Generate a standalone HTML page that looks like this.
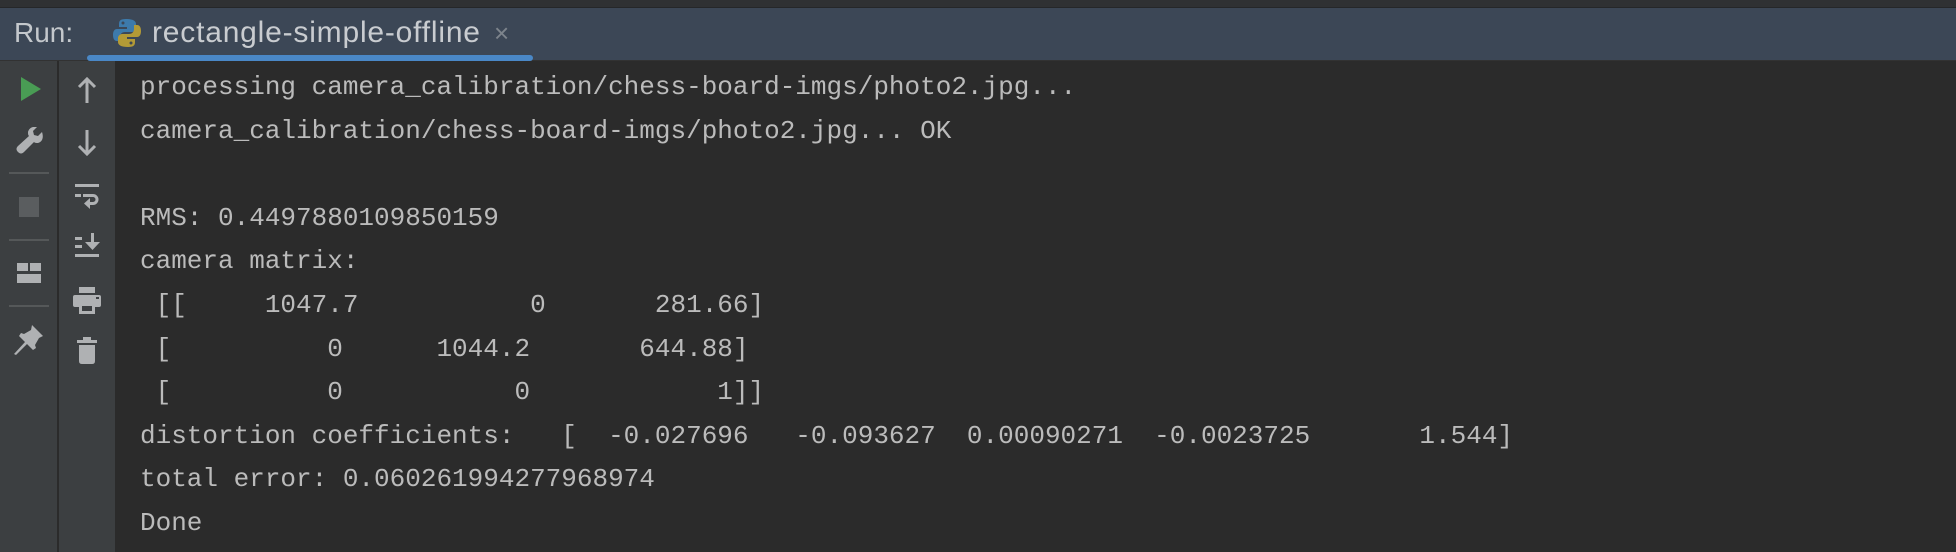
<!DOCTYPE html>
<html><head><meta charset="utf-8"><style>
html,body{margin:0;padding:0;width:1956px;height:552px;overflow:hidden;background:#2b2b2b;}
.top{position:absolute;left:0;top:0;width:1956px;height:7px;background:#2f3133;border-bottom:1px solid #252729;}
.tabs{position:absolute;left:0;top:8px;width:1956px;height:52px;background:#3c4756;}
.tabline{position:absolute;left:0;top:60px;width:1956px;height:1px;background:#323232;}
.run{position:absolute;left:14px;top:17px;font:28px "Liberation Sans",sans-serif;color:#c4c8cc;}
.tabt{position:absolute;left:152px;top:16px;font:30px "Liberation Sans",sans-serif;letter-spacing:0.8px;color:#c9ccd0;white-space:nowrap;}
.x{position:absolute;left:494px;top:18px;font:26px "Liberation Sans",sans-serif;color:#7d848c;}
.ul{position:absolute;left:87px;top:55px;width:446px;height:6px;border-radius:3px;background:#4a88c7;}
.c1{position:absolute;left:0;top:61px;width:57px;height:491px;background:#3c3f41;}
.c2{position:absolute;left:59px;top:61px;width:56px;height:491px;background:#3c3f41;}
.sep{position:absolute;left:9px;width:40px;height:2px;background:#555859;}
pre{position:absolute;left:140px;top:66px;margin:0;font:26px/43.6px "Liberation Mono",monospace;color:#bbbbbb;}
svg{position:absolute;}
</style></head><body>
<div class="top"></div>
<div class="tabs"></div>
<div class="tabline"></div>
<div class="run">Run:</div>
<svg style="left:113px;top:18px" width="28" height="30" viewBox="0 0 28 30">
<path d="M13 1C7 1 6 3 6 6v3h8v2H4C1 11 0 14 0 17s1 6 4 6h3v-4c0-3 2-5 5-5h7c2 0 4-2 4-4V6c0-3-3-5-10-5z" fill="#3d7aab"/>
<circle cx="10" cy="5" r="1.5" fill="#3c4756"/>
<path d="M15 29c6 0 7-2 7-5v-3h-8v-2h10c3 0 4-3 4-6s-1-6-4-6h-3v4c0 3-2 5-5 5H9c-2 0-4 2-4 4v4c0 3 3 5 10 5z" fill="#b39a36"/>
<circle cx="18" cy="25" r="1.5" fill="#3c4756"/>
</svg>
<div class="tabt">rectangle-simple-offline</div>
<div class="x">×</div>
<div class="ul"></div>
<div class="c1"></div>
<div class="c2"></div>
<svg style="left:21px;top:77px" width="20" height="24"><path d="M0 0L20 12L0 24Z" fill="#499c54"/></svg>
<svg style="left:16px;top:127px" width="28" height="27" viewBox="0 0 28 27"><path d="M26 5l-4 4-4-1-1-4 4-4c-4-1-8 1-9 5 0 2 0 3 1 4L2 19c-2 2-2 4 0 6s4 2 6 0l10-10c1 1 2 1 4 1 4-1 6-5 4-11z" fill="#afb1b3"/></svg>
<div class="sep" style="top:172px"></div>
<div style="position:absolute;left:19px;top:197px;width:20px;height:20px;background:#5a5d5f"></div>
<div class="sep" style="top:239px"></div>
<svg style="left:17px;top:263px" width="24" height="20"><rect x="0" y="0" width="11" height="8" fill="#afb1b3"/><rect x="13" y="0" width="11" height="8" fill="#afb1b3"/><rect x="0" y="11" width="24" height="9" fill="#afb1b3"/></svg>
<div class="sep" style="top:305px"></div>
<svg style="left:14px;top:325px" width="30" height="30" viewBox="0 0 30 30"><path d="M18 0L29 11L25 13L21 20L22 23L19 25L13 19L2 30L0 29L11 17L5 11L7 8L10 9L17 5Z" fill="#afb1b3"/></svg>
<svg style="left:77px;top:77px" width="20" height="26"><path d="M10 2V26M2 10L10 2L18 10" stroke="#afb1b3" stroke-width="3" fill="none"/></svg>
<svg style="left:77px;top:130px" width="20" height="26"><path d="M10 0V24M2 16L10 24L18 16" stroke="#afb1b3" stroke-width="3" fill="none"/></svg>
<svg style="left:75px;top:182px" width="26" height="30"><rect x="0" y="2" width="24" height="3" fill="#afb1b3"/><rect x="0" y="12" width="6" height="3" fill="#afb1b3"/><path d="M8 13.5H18a4 4 0 0 1 0 8H13" stroke="#afb1b3" stroke-width="3" fill="none"/><path d="M9 21.5L15 16V27Z" fill="#afb1b3"/></svg>
<svg style="left:75px;top:233px" width="26" height="25"><rect x="0" y="4" width="7" height="3" fill="#afb1b3"/><rect x="0" y="12" width="7" height="3" fill="#afb1b3"/><rect x="0" y="21" width="24" height="3" fill="#afb1b3"/><rect x="16" y="0" width="3" height="10" fill="#afb1b3"/><path d="M10 9H25L17.5 17Z" fill="#afb1b3"/></svg>
<svg style="left:73px;top:287px" width="28" height="27"><rect x="6" y="0" width="16" height="6" fill="#afb1b3"/><rect x="0" y="8" width="28" height="12" rx="2" fill="#afb1b3"/><rect x="6" y="16" width="16" height="11" fill="#afb1b3"/><rect x="9" y="19" width="10" height="5" fill="#3c3f41"/><rect x="23" y="10" width="3" height="2" fill="#3c3f41"/></svg>
<svg style="left:77px;top:337px" width="20" height="27"><rect x="0" y="3" width="20" height="3" fill="#afb1b3"/><rect x="6" y="0" width="8" height="3" fill="#afb1b3"/><path d="M2 8H18V24Q18 27 15 27H5Q2 27 2 24Z" fill="#afb1b3"/></svg>
<pre>processing camera_calibration/chess-board-imgs/photo2.jpg...
camera_calibration/chess-board-imgs/photo2.jpg... OK

RMS: 0.4497880109850159
camera matrix:
 [[     1047.7           0       281.66]
 [          0      1044.2       644.88]
 [          0           0            1]]
distortion coefficients:   [  -0.027696   -0.093627  0.00090271  -0.0023725       1.544]
total error: 0.060261994277968974
Done</pre>
</body></html>
